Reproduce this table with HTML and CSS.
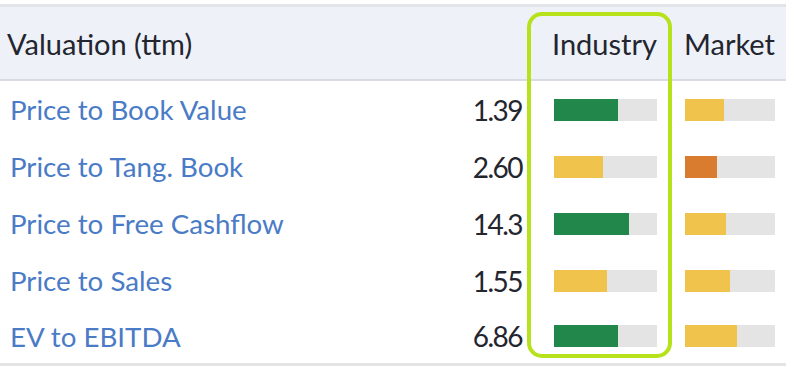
FILE: index.html
```html
<!DOCTYPE html>
<html>
<head>
<meta charset="utf-8">
<link rel="stylesheet" href="styles.css">
</head>
<body>
<div class="table">
  <div class="row head">
    <div class="name">Valuation (ttm)</div>
    <div class="val"></div>
    <div class="cell ind">Industry</div>
    <div class="cell mkt">Market</div>
  </div>
  <div class="row">
    <div class="name link">Price to Book Value</div>
    <div class="val">1.39</div>
    <div class="cell ind"><div class="track"><div class="fill green" style="width:64px"></div></div></div>
    <div class="cell mkt"><div class="track"><div class="fill yellow" style="width:39px"></div></div></div>
  </div>
  <div class="row">
    <div class="name link">Price to Tang. Book</div>
    <div class="val">2.60</div>
    <div class="cell ind"><div class="track"><div class="fill yellow" style="width:49px"></div></div></div>
    <div class="cell mkt"><div class="track"><div class="fill orange" style="width:32px"></div></div></div>
  </div>
  <div class="row">
    <div class="name link">Price to Free Cashflow</div>
    <div class="val">14.3</div>
    <div class="cell ind"><div class="track"><div class="fill green" style="width:75px"></div></div></div>
    <div class="cell mkt"><div class="track"><div class="fill yellow" style="width:41px"></div></div></div>
  </div>
  <div class="row">
    <div class="name link">Price to Sales</div>
    <div class="val">1.55</div>
    <div class="cell ind"><div class="track"><div class="fill yellow" style="width:53px"></div></div></div>
    <div class="cell mkt"><div class="track"><div class="fill yellow" style="width:45px"></div></div></div>
  </div>
  <div class="row last">
    <div class="name link">EV to EBITDA</div>
    <div class="val">6.86</div>
    <div class="cell ind"><div class="track"><div class="fill green" style="width:64px"></div></div></div>
    <div class="cell mkt"><div class="track"><div class="fill yellow" style="width:52px"></div></div></div>
  </div>
  <div class="highlight"></div>
</div>
</body>
</html>
```

FILE: styles.css
```css
html, body {
  margin: 0;
  padding: 0;
  background: #ffffff;
}
body {
  font-family: Lato, "Open Sans", sans-serif;
  font-size: 27.7px;
  color: #23252f;
}
.table {
  position: relative;
  margin-top: 4px;
  border-top: 3px solid #e3e4e8;
  border-bottom: 3px solid #e4e4e4;
  width: 786px;
}
.row {
  display: flex;
  align-items: center;
  height: 57px;
  padding-left: 10px;
  padding-right: 11px;
}
.row.last {
  height: 54px;
}
.row.head {
  height: 72px;
  padding-left: 7px;
  font-size: 29px;
  background: #eef1f8;
  border-bottom: 2px solid #d8dbe1;
}
.name {
  flex: 1;
  white-space: nowrap;
}
.link {
  color: #4a7bc6;
}
.val {
  text-align: right;
  color: #23252f;
  font-size: 28px;
  letter-spacing: -1.5px;
  margin-right: 1px;
}
.cell {
  white-space: nowrap;
}
.cell.ind {
  width: 103px;
  margin-left: 31px;
}
.cell.mkt {
  width: 90px;
  margin-left: 28px;
}
.head .cell.ind {
  margin-left: 30px;
  width: 105px;
}
.head .cell.mkt {
  margin-left: 27px;
  width: 91px;
}
.track {
  height: 22px;
  background: #e4e4e4;
  display: flex;
}
.fill {
  height: 100%;
}
.green { background: #22874a; }
.yellow { background: #f0c44c; }
.orange { background: #d97c30; }
.highlight {
  position: absolute;
  left: 527px;
  top: 5px;
  width: 137px;
  height: 338px;
  border: 4px solid #b6e21b;
  border-radius: 15px;
}
```
